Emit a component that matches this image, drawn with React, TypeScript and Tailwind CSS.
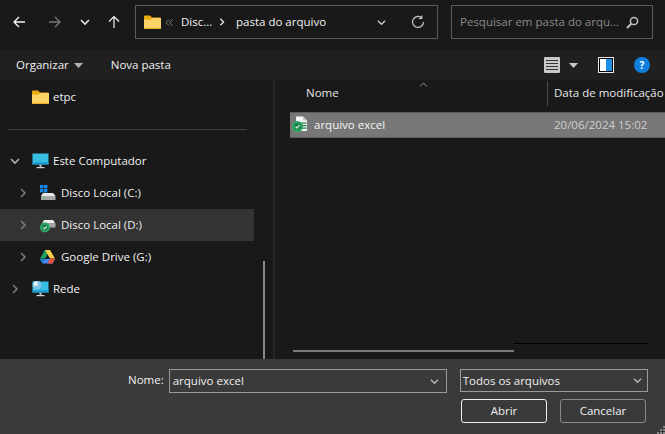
import React from "react";

const font = { fontFamily: '"Open Sans", "Noto Sans", sans-serif' };

function Folder({ className = "" }: { className?: string }) {
  return (
    <svg width="17" height="14" viewBox="0 0 17 14" className={className}>
      <path d="M0 1.5A1 1 0 0 1 1 .5h5l2 2h8a1 1 0 0 1 1 1V13a1 1 0 0 1-1 1H1a1 1 0 0 1-1-1Z" fill="#e9a90f" />
      <path d="M0 4.5 7 4.5 8.5 3H16a1 1 0 0 1 1 1v9a1 1 0 0 1-1 1H1a1 1 0 0 1-1-1Z" fill="#fbd367" />
      <rect x="0" y="12.8" width="17" height="1.2" fill="#eeb32b" />
    </svg>
  );
}

function Chevron({ dir, color = "#7a7a7a", size = 10 }: { dir: "right" | "down"; color?: string; size?: number }) {
  return (
    <svg width={size} height={size} viewBox="0 0 10 10" fill="none">
      <path d={dir === "right" ? "M3 1l4 4-4 4" : "M1 3l4 4 4-4"} stroke={color} strokeWidth="1.6" />
    </svg>
  );
}

function Monitor({ globe = false }: { globe?: boolean }) {
  return (
    <svg width="17" height="16" viewBox="0 0 17 16">
      <rect x="0.5" y="0.5" width="16" height="11" fill="#36bfe3" />
      <rect x="0.5" y="9.5" width="16" height="2" fill="#1a93c4" />
      <rect x="7.5" y="11.5" width="2" height="3" fill="#a9bcc6" />
      <rect x="4.5" y="14" width="8" height="1.2" fill="#c8d3d9" />
      {globe && <circle cx="5" cy="4" r="4.5" fill="#7fc4e6" />}
      {globe && <circle cx="3.8" cy="2.8" r="2.2" fill="#dff3fb" />}
    </svg>
  );
}

function DriveC() {
  return (
    <svg width="16" height="16" viewBox="0 0 16 16">
      <rect x="0" y="0" width="3.4" height="3.4" fill="#1b86e3" />
      <rect x="4" y="0" width="3.4" height="3.4" fill="#1b86e3" />
      <rect x="0" y="4" width="3.4" height="3.4" fill="#1b86e3" />
      <rect x="4" y="4" width="3.4" height="3.4" fill="#1b86e3" />
      <path d="M3 8h10l2.5 3H1Z" fill="#e8e8e8" />
      <rect x="1" y="11" width="14.5" height="4" fill="#a7a7a7" />
      <rect x="3" y="12.5" width="1.5" height="1.2" fill="#59d04a" />
    </svg>
  );
}

function DriveD() {
  return (
    <svg width="16" height="16" viewBox="0 0 16 16">
      <path d="M4 3h9l2.5 3.5H2Z" fill="#ececec" />
      <rect x="2" y="6.5" width="13.5" height="4" fill="#a7a7a7" />
      <circle cx="5" cy="10.5" r="5" fill="#2fa766" />
      <circle cx="5" cy="10.5" r="3" fill="#1c7d4b" />
      <path d="M3.3 10.5l1.3 1.4 2.2-2.6" stroke="#d5f2df" strokeWidth="1.1" fill="none" />
    </svg>
  );
}

function GDrive() {
  return (
    <svg width="15" height="14" viewBox="0 0 15 14">
      <path d="M5 0h5L5.2 8.5H0Z" fill="#1fa463" />
      <path d="M5 0h5l5 8.5h-5Z" fill="#ffd04b" />
      <path d="M0 9h15l-2.5 4.6H2.5Z" fill="#4688f4" />
      <path d="M0 9h5l-2.4 4.6Z" fill="#1d7fd8" />
      <path d="M10 9h5l-2.5 4.6H7.5Z" fill="#e8503f" />
    </svg>
  );
}

function ExcelFile() {
  return (
    <svg width="17" height="18" viewBox="0 0 17 18">
      <path d="M4 0.5h7l4 4V15H4Z" fill="#f4f6f4" />
      <path d="M11 0.5l4 4h-4Z" fill="#bfc9c1" />
      <rect x="9.5" y="6.5" width="5" height="1.2" fill="#217346" />
      <rect x="9.5" y="9" width="5" height="1.2" fill="#217346" />
      <rect x="9.5" y="11.5" width="5" height="1.2" fill="#217346" />
      <circle cx="5.5" cy="10.5" r="5.5" fill="#2fa766" />
      <circle cx="5.5" cy="10.5" r="3.3" fill="#1c7d4b" />
      <path d="M3.6 10.5l1.5 1.6 2.4-2.9" stroke="#d5f2df" strokeWidth="1.2" fill="none" />
    </svg>
  );
}

function NavRow({ pad, chevron, icon, label, active = false }: { pad: string; chevron?: "right" | "down"; icon: React.ReactNode; label: string; active?: boolean }) {
  return (
    <div className={`flex h-8 w-[254px] items-center ${pad} ${active ? "bg-[#333333]" : ""}`}>
      <div className="flex w-[22px] shrink-0 items-center">{chevron && <Chevron dir={chevron} color={chevron === "down" ? "#b0b0b0" : "#7a7a7a"} />}</div>
      <div className="flex w-[21px] shrink-0 items-center">{icon}</div>
      <span className="text-[11.5px] leading-none text-[#f0f0f0]">{label}</span>
    </div>
  );
}

export default function App() {
  return (
    <div style={font} className="flex h-[434px] w-[665px] flex-col overflow-hidden bg-[#191919] text-white">
      {/* Address bar */}
      <div className="flex h-[44px] shrink-0 items-center pl-[12px] pr-[12px]">
        <svg width="16" height="14" viewBox="0 0 16 14" fill="none" stroke="#f2f2f2" strokeWidth="1.4">
          <path d="M13 7H2M7 2 2 7l5 5" />
        </svg>
        <svg width="16" height="14" viewBox="0 0 16 14" fill="none" stroke="#767676" strokeWidth="1.4" className="ml-[19px]">
          <path d="M2 7h11M8 2l5 5-5 5" />
        </svg>
        <div className="ml-[17px]"><Chevron dir="down" color="#e0e0e0" /></div>
        <svg width="14" height="14" viewBox="0 0 14 14" fill="none" stroke="#f2f2f2" strokeWidth="1.2" className="ml-[17px]">
          <path d="M7 13V1.5M2 6.5l5-5 5 5" />
        </svg>
        <div className="ml-[14px] flex h-[34px] w-[303px] items-center border border-[#5a5a5a] pl-[8px]">
          <Folder />
          <svg width="8" height="7" viewBox="0 0 8 7" fill="none" stroke="#8c8c8c" strokeWidth="0.9" className="ml-[4px]">
            <path d="M4 .5 1 3.5l3 3M7.5 .5l-3 3 3 3" />
          </svg>
          <span className="ml-[8px] w-[31px] whitespace-nowrap text-[11.5px] text-[#f0f0f0]">Disc...</span>
          <span className="ml-[6px]"><Chevron dir="right" color="#e8e8e8" size={8} /></span>
          <span className="ml-[10px] text-[11.5px] text-[#f0f0f0]">pasta do arquivo</span>
          <span className="ml-auto"><Chevron dir="down" color="#c8c8c8" size={9} /></span>
          <svg width="14" height="14" viewBox="0 0 14 14" fill="none" stroke="#c8c8c8" strokeWidth="1.2" className="ml-[25px] mr-[12px]">
            <path d="M12.5 7A5.5 5.5 0 1 1 10.5 2.7M10.8 0.5v3h-3" />
          </svg>
        </div>
        <div className="ml-[13px] flex h-[34px] grow items-center border border-[#5a5a5a] pl-[8px] pr-[13px]">
          <span className="whitespace-nowrap text-[11.5px] text-[#8a8a8a]">Pesquisar em pasta do arqu...</span>
          <svg width="13" height="13" viewBox="0 0 13 13" fill="none" stroke="#c0c0c0" strokeWidth="1.5" className="ml-auto">
            <circle cx="8" cy="5" r="3.6" />
            <path d="M5.3 7.7 1 12" strokeWidth="2" />
          </svg>
        </div>
      </div>
      <div className="h-[6px] shrink-0" />

      {/* Toolbar */}
      <div className="flex h-[30px] shrink-0 items-center bg-[#202020] pl-[16px] pr-[15px]">
        <span className="text-[11.5px] text-[#f0f0f0]">Organizar</span>
        <svg width="9" height="5" viewBox="0 0 9 5" className="ml-[5px]"><path d="M0 0h9L4.5 5Z" fill="#b5b5b5" /></svg>
        <span className="ml-[28px] text-[11.5px] text-[#f0f0f0]">Nova pasta</span>
        <svg width="16" height="16" viewBox="0 0 16 16" className="ml-auto">
          <rect width="16" height="16" rx="1" fill="#c9c9c9" />
          <path d="M2 3.5h12M2 6.5h12M2 9.5h12M2 12.5h12" stroke="#333" strokeWidth="1" />
        </svg>
        <svg width="9" height="5" viewBox="0 0 9 5" className="ml-[9px]"><path d="M0 0h9L4.5 5Z" fill="#c8c8c8" /></svg>
        <svg width="16" height="16" viewBox="0 0 16 16" className="ml-[20px]">
          <rect width="16" height="16" fill="#e8e8e8" />
          <rect x="1" y="1" width="14" height="14" fill="#000000" />
          <rect x="2" y="2" width="6" height="12" fill="#ffffff" />
          <rect x="8" y="2" width="6" height="12" fill="#1e8fe3" />
        </svg>
        <div className="ml-[20px] flex h-4 w-4 items-center justify-center rounded-full bg-[#0f7fde] text-[10px] font-bold text-white">?</div>
      </div>

      {/* Main */}
      <div className="flex min-h-0 grow">
        {/* Nav */}
        <div className="relative w-[273px] shrink-0">
          <div className="flex h-[34px] items-center pl-[32px]">
            <Folder />
            <span className="ml-[4px] text-[11.5px] text-[#f0f0f0]">etpc</span>
          </div>
          <div className="ml-[8px] mt-[15px] h-px w-[239px] bg-[#3d3d3d]" />
          <div className="mt-[15px]">
            <NavRow pad="pl-[10px]" chevron="down" icon={<Monitor />} label="Este Computador" />
            <NavRow pad="pl-[18px]" chevron="right" icon={<DriveC />} label="Disco Local (C:)" />
            <NavRow pad="pl-[18px]" chevron="right" icon={<DriveD />} label="Disco Local (D:)" active />
            <NavRow pad="pl-[18px]" chevron="right" icon={<GDrive />} label="Google Drive (G:)" />
            <NavRow pad="pl-[10px]" chevron="right" icon={<Monitor globe />} label="Rede" />
          </div>
          {/* nav scrollbar */}
          <div className="absolute left-[263px] top-[181px] h-[98px] w-[2px] bg-[#8a8a8a]" />
        </div>
        <div className="w-[2px] shrink-0 bg-[#262626]" />

        {/* File list */}
        <div className="relative flex min-w-0 grow flex-col">
          <div className="flex h-[32px] shrink-0 items-center pb-[6px] pl-[31px]">
            <span className="w-[241px] text-[11.5px] text-[#e6e6e6]">Nome</span>
            <div className="h-[25px] w-px bg-[#4a4a4a]" />
            <span className="ml-[6px] whitespace-nowrap text-[11.5px] text-[#e6e6e6]">Data de modificação</span>
          </div>
          <svg width="9" height="5" viewBox="0 0 9 5" fill="none" stroke="#9a9a9a" className="absolute left-[144px] top-[2px]"><path d="M1 4.5 4.5 1 8 4.5" /></svg>
          <div className="ml-[15px] flex h-[26px] items-center border-y border-[#5c5c5c] bg-[#777777] pl-[2px]">
            <ExcelFile />
            <span className="ml-[5px] w-[240px] text-[11.5px] text-[#f5f5f5]">arquivo excel</span>
            <span className="text-[11.5px] text-[#cfcfcf]">20/06/2024 15:02</span>
          </div>
          <div className="grow" />
          <div className="relative mb-[7px] ml-[18px] h-[2px] w-[221px] bg-[#7a7a7a]" />
          <div className="absolute left-[239px] top-[263px] h-px w-[134px] bg-black" />
        </div>
      </div>

      {/* Bottom */}
      <div className="relative flex h-[75px] shrink-0 flex-col bg-[#3a3a3a]">
        <div className="flex h-[37px] items-start pt-[10px]">
          <span className="ml-[128px] mt-[2px] text-[11.5px] text-[#f0f0f0]">Nome:</span>
          <div className="ml-[5px] flex h-[24px] w-[278px] items-center border border-[#9a9a9a] pl-[3px] pr-[7px]">
            <span className="text-[11.5px] text-[#f0f0f0]">arquivo excel</span>
            <span className="ml-auto"><Chevron dir="down" color="#b5b5b5" size={9} /></span>
          </div>
          <div className="ml-[13px] flex h-[23px] w-[188px] items-center border border-[#9a9a9a] pl-[2px] pr-[5px]">
            <span className="text-[11.5px] text-[#f0f0f0]">Todos os arquivos</span>
            <span className="ml-auto"><Chevron dir="down" color="#b5b5b5" size={9} /></span>
          </div>
        </div>
        <div className="ml-[461px] mt-[3px] flex gap-[13px]">
          <div className="flex h-[24px] w-[86px] items-center justify-center rounded-[3px] border border-[#eeeeee] text-[11.5px] text-[#f0f0f0]">Abrir</div>
          <div className="flex h-[24px] w-[86px] items-center justify-center rounded-[3px] border border-[#8a8a8a] text-[11.5px] text-[#f0f0f0]">Cancelar</div>
        </div>
        <svg width="8" height="8" viewBox="0 0 8 8" fill="#8a8a8a" className="absolute bottom-0 right-0">
          <rect x="6" y="0" width="2" height="2" /><rect x="3" y="3" width="2" height="2" /><rect x="6" y="3" width="2" height="2" /><rect x="0" y="6" width="2" height="2" /><rect x="3" y="6" width="2" height="2" /><rect x="6" y="6" width="2" height="2" />
        </svg>
      </div>
    </div>
  );
}
